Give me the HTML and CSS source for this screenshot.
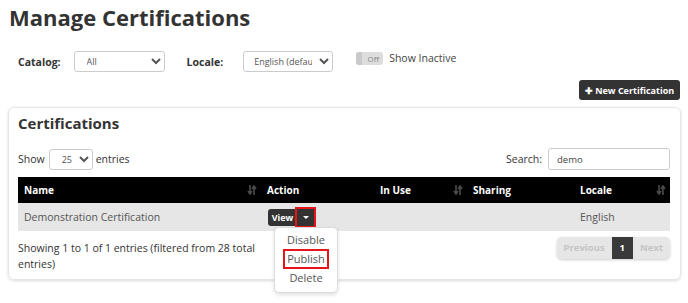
FILE: index.html
```html
<!DOCTYPE html>
<html lang="en">

<head>
    <meta charset="UTF-8">
    <meta name="viewport" content="width=device-width, initial-scale=1.0">
    <title>Manage Certifications</title>
    <link rel="stylesheet" href="styles.css">
</head>

<body>
    <h1>Manage Certifications</h1>

    <div class="filters">
        <label class="filter-label">Catalog:</label>
        <select class="catalog-select">
            <option>All</option>
        </select>
        <label class="filter-label locale-label">Locale:</label>
        <select class="locale-select">
            <option>English (default)</option>
        </select>
        <div class="toggle-wrap">
            <span class="toggle"><span class="toggle-knob"></span>Off</span>
            <span class="toggle-text">Show Inactive</span>
        </div>
    </div>

    <div class="toolbar">
        <button class="new-btn"><span class="plus">&#10010;</span> New Certification</button>
    </div>

    <div class="card">
        <h2>Certifications</h2>

        <div class="table-controls">
            <div class="length">
                Show
                <select class="length-select">
                    <option>25</option>
                </select>
                entries
            </div>
            <div class="search">
                Search:
                <input type="text" value="demo">
            </div>
        </div>

        <table class="data-table">
            <thead>
                <tr>
                    <th class="col-name">Name <svg class="sort" viewBox="0 0 10 10"><path d="M3 0v8M1 6l2 3 2-3M7 10V2M5 4l2-3 2 3"/></svg></th>
                    <th class="col-action">Action</th>
                    <th class="col-inuse">In Use <svg class="sort" viewBox="0 0 10 10"><path d="M3 0v8M1 6l2 3 2-3M7 10V2M5 4l2-3 2 3"/></svg></th>
                    <th class="col-sharing">Sharing</th>
                    <th class="col-locale">Locale <svg class="sort" viewBox="0 0 10 10"><path d="M3 0v8M1 6l2 3 2-3M7 10V2M5 4l2-3 2 3"/></svg></th>
                </tr>
            </thead>
            <tbody>
                <tr>
                    <td>Demonstration Certification</td>
                    <td>
                        <div class="btn-group">
                            <button class="view-btn">View</button>
                            <button class="caret-btn highlight"><span class="caret"></span></button>
                            <ul class="menu">
                                <li>Disable</li>
                                <li><span class="highlight-item">Publish</span></li>
                                <li>Delete</li>
                            </ul>
                        </div>
                    </td>
                    <td></td>
                    <td></td>
                    <td>English</td>
                </tr>
            </tbody>
        </table>

        <div class="table-footer">
            <div class="info">Showing 1 to 1 of 1 entries (filtered from 28 total entries)</div>
            <div class="pager">
                <span class="page-btn">Previous</span>
                <span class="page-btn current">1</span>
                <span class="page-btn">Next</span>
            </div>
        </div>
    </div>
</body>

</html>
```

FILE: styles.css
```css
html {
    height: 100%;
}

body {
    font-family: "Open Sans", Arial, sans-serif;
    font-size: 10.5px;
    color: #333;
    margin: 0;
    padding: 0 8px;
    min-height: 100%;
    background-color: #fff;
}

h1 {
    font-size: 22px;
    font-weight: 700;
    margin: 0;
    padding-left: 1px;
    line-height: 34px;
    color: #333;
}

.filters {
    display: flex;
    align-items: center;
    margin-top: 17px;
    padding-left: 10px;
    height: 21px;
}

.filter-label {
    font-weight: 700;
    color: #333;
}

select {
    font-family: "Open Sans", Arial, sans-serif;
    font-size: 9px;
    color: #555;
    height: 21px;
    border: 1px solid #ccc;
    border-radius: 3px;
    background-color: #fff;
    padding: 0 4px;
}

.catalog-select {
    width: 91px;
    margin-left: 13px;
    padding-left: 8px;
}

.locale-label {
    margin-left: 22px;
}

.locale-select {
    width: 90px;
    margin-left: 20px;
    padding-left: 6px;
}

.toggle-wrap {
    display: flex;
    align-items: center;
    margin-left: 23px;
    margin-top: -7px;
}

.toggle {
    position: relative;
    display: inline-block;
    width: 27px;
    height: 13px;
    line-height: 13px;
    border-radius: 3px;
    background-color: #ddd;
    color: #888;
    font-size: 8px;
    text-align: right;
    padding-right: 4px;
    box-sizing: border-box;
}

.toggle-knob {
    position: absolute;
    left: 0;
    top: 0;
    width: 6px;
    height: 13px;
    border-radius: 3px 0 0 3px;
    background-color: #c9c9c9;
}

.toggle-text {
    margin-left: 6px;
    color: #444;
}

.toolbar {
    display: flex;
    justify-content: flex-end;
    margin-top: 8px;
}

.new-btn {
    font-family: "Open Sans", Arial, sans-serif;
    font-size: 9px;
    font-weight: 700;
    color: #fff;
    background-color: #333;
    border: none;
    border-radius: 3px;
    height: 20px;
    width: 101px;
    padding: 0;
    cursor: pointer;
}

.plus {
    font-size: 9px;
}

.card {
    margin-top: 7px;
    width: 673px;
    box-sizing: border-box;
    border: 1px solid #e6e6e6;
    border-radius: 6px;
    box-shadow: 0 1px 3px rgba(0, 0, 0, 0.15);
    padding: 5px 10px 7px 9px;
}

h2 {
    font-size: 15px;
    font-weight: 700;
    margin: 0;
    line-height: 20px;
    color: #333;
}

.table-controls {
    display: flex;
    justify-content: space-between;
    align-items: center;
    margin-top: 15px;
    height: 22px;
}

.length {
    display: flex;
    align-items: center;
}

.length-select {
    width: 44px;
    height: 21px;
    margin: 0 3px 0 4px;
    padding-left: 8px;
}

.search {
    display: flex;
    align-items: center;
}

.search input {
    font-family: "Open Sans", Arial, sans-serif;
    font-size: 9.5px;
    color: #444;
    width: 122px;
    height: 22px;
    box-sizing: border-box;
    border: 1px solid #ccc;
    border-radius: 3px;
    padding: 0 8px;
    margin-left: 6px;
}

.data-table {
    width: 652px;
    border-collapse: collapse;
    margin-top: 7px;
}

.data-table th {
    background-color: #000;
    color: #fff;
    font-size: 10px;
    font-weight: 700;
    text-align: left;
    height: 26px;
    padding: 0 6px;
    position: relative;
}

.col-name { width: 231px; }
.col-action { width: 101px; }
.col-inuse { width: 81px; }
.col-sharing { width: 95px; }

.sort {
    position: absolute;
    right: 4px;
    top: 8px;
    width: 10px;
    height: 10px;
    fill: none;
    stroke: #4a4a4a;
    stroke-width: 1.6;
}

.data-table td {
    background-color: #e6e6e6;
    color: #555;
    height: 28px;
    padding: 0 6px;
}

.btn-group {
    display: flex;
    align-items: center;
    position: relative;
    margin-left: 1px;
}

.view-btn {
    font-family: "Open Sans", Arial, sans-serif;
    font-size: 9px;
    font-weight: 700;
    color: #fff;
    background-color: #333;
    border: none;
    border-radius: 3px 0 0 3px;
    height: 17px;
    width: 29px;
    padding: 0;
}

.caret-btn {
    background-color: #333;
    border: none;
    height: 17px;
    width: 17px;
    padding: 0;
    display: flex;
    align-items: center;
    justify-content: center;
}

.caret-btn.highlight {
    outline: 2px solid #e8141b;
}

.caret {
    width: 0;
    height: 0;
    border-left: 3px solid transparent;
    border-right: 3px solid transparent;
    border-top: 3px solid #fff;
}

.menu {
    position: absolute;
    left: 6px;
    top: 18px;
    width: 64px;
    box-sizing: border-box;
    margin: 0;
    padding: 3px 0 4px;
    list-style: none;
    background-color: #fff;
    border: 1px solid #ddd;
    border-radius: 5px;
    box-shadow: 0 2px 4px rgba(0, 0, 0, 0.12);
    z-index: 2;
}

.menu li {
    text-align: center;
    font-size: 11px;
    color: #555;
    line-height: 18.5px;
}

.highlight-item {
    display: inline-block;
    border: 2px solid #e8141b;
    padding: 0 2px;
    line-height: 16px;
}

.table-footer {
    display: flex;
    justify-content: space-between;
    align-items: flex-start;
    margin-top: 6px;
}

.info {
    width: 272px;
    line-height: 16px;
    margin-top: 3px;
    color: #333;
}

.pager {
    display: flex;
    height: 22px;
    border-radius: 5px;
    background-color: #e6e6e6;
    box-shadow: 0 1px 3px rgba(0, 0, 0, 0.2);
    overflow: hidden;
}

.page-btn {
    font-size: 9.5px;
    font-weight: 700;
    color: #c4c4c4;
    line-height: 22px;
    padding: 0 7px;
}

.page-btn.current {
    background-color: #3a3a3a;
    color: #fff;
    padding: 0 8px;
}
```
